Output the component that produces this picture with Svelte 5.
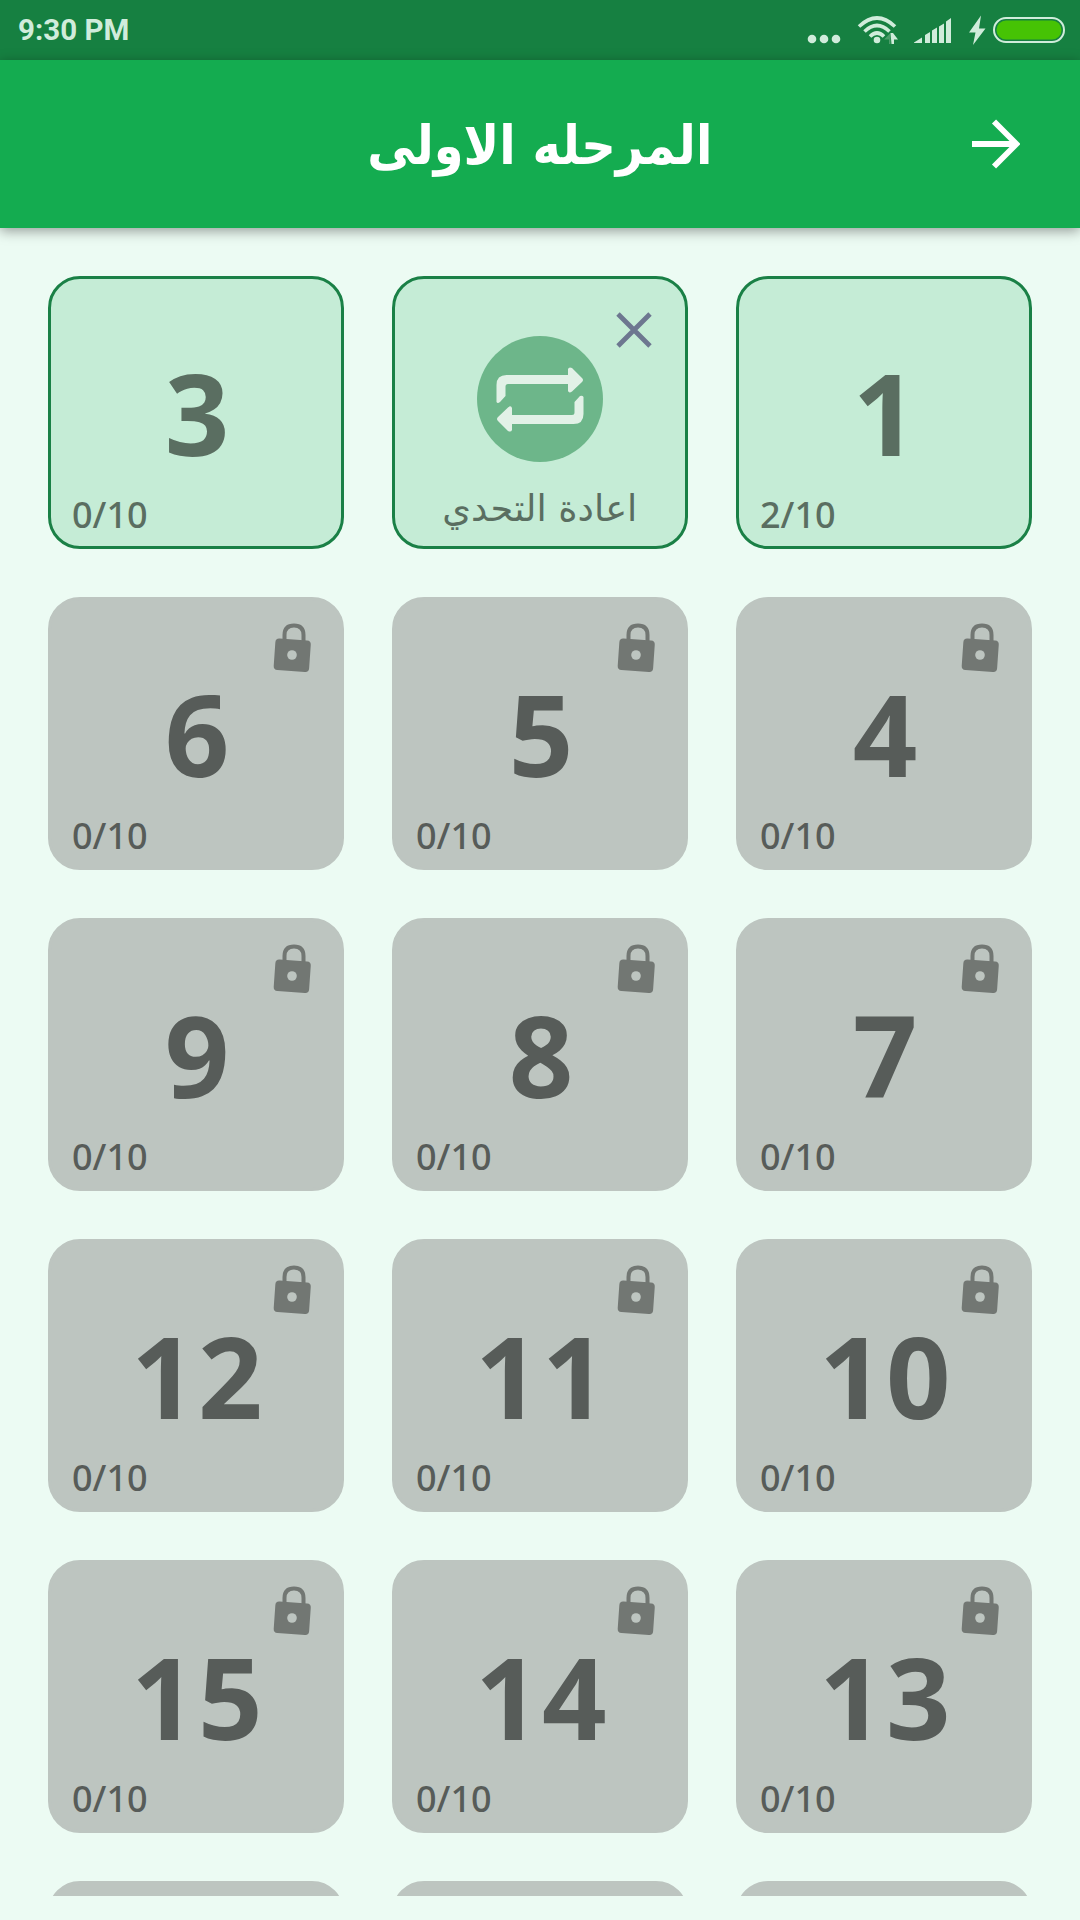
<script>
  const total = 15;
  const upcoming = [16, 17, 18];

  let levels = $state(
    Array.from({ length: total }, (_, i) => ({
      number: i + 1,
      score: i === 0 ? 2 : 0,
      locked: i > 2,
      retry: i === 1
    }))
  );

  function dismissRetry(level) {
    level.retry = false;
  }
</script>

<div class="screen">
  <div class="status-bar">
    <span class="clock">9:30 PM</span>
    <svg class="dots" width="36" height="60" viewBox="806 0 36 60">
      <circle cx="812" cy="39" r="4.3" />
      <circle cx="824" cy="39" r="4.3" />
      <circle cx="836" cy="39" r="4.3" />
    </svg>
    <svg class="wifi" width="42" height="60" viewBox="856 0 42 60">
      <g fill="none" stroke="#d0ecdb" stroke-width="3.6">
        <path d="M859 26.5Q877 9.500 895 26.500" />
        <path d="M864.500 31.500Q877 19.500 889.500 31.500" />
        <path d="M870 36.500Q877 29.500 884 36.500" />
      </g>
      <circle cx="877" cy="40" r="3.300" />
      <path d="M884 39.500L890.500 33V44H889V39.500z" fill="#4b9c69" />
      <path d="M890.500 33H893L898 39.500H894V44H891.500z" />
    </svg>
    <svg class="signal" width="38" height="60" viewBox="914 0 38 60">
      <path d="M914 42.500L922 37.500V43H914zM925 35L930 32V43H925zM932 30.500L937 27.500V43H932zM939 26.500L944 23.500V43H939zM946 21.500L951 18V43H946z" />
    </svg>
    <svg class="charge" width="96" height="60" viewBox="969 0 96 60">
      <path d="M981 15.500L969 32.500H975.500L973 45L985.500 28.500H979z" />
      <rect x="994" y="18" width="70" height="24" rx="12" fill="none" stroke="#d0ecdb" stroke-width="2" />
      <rect x="996.500" y="20.500" width="65" height="19" rx="9.500" class="charge-level" />
    </svg>
  </div>

  <header class="app-bar" dir="rtl">
    <button type="button" class="back" aria-label="رجوع">
      <svg width="50" height="50" viewBox="0 0 50 50">
        <path d="M2 25H45M24 2.500L46.500 25L24 47.500" fill="none" stroke="#fff" stroke-width="5.800" />
      </svg>
    </button>
    <h1><span>المرحله الاولى</span></h1>
  </header>

  <main class="levels" dir="rtl">
    {#each levels as level (level.number)}
      <div class="card" class:locked={level.locked}>
        {#if level.retry}
          <button type="button" class="dismiss" aria-label="اغلاق" onclick={() => dismissRetry(level)}>
            <svg width="36" height="36" viewBox="0 0 36 36">
              <path d="M2 2L34 34M34 2L2 34" fill="none" stroke="#6d7790" stroke-width="4.800" />
            </svg>
          </button>
          <svg class="retry-icon" width="126" height="126" viewBox="0 0 126 126">
            <circle cx="63" cy="63" r="63" fill="#6db68a" />
            <path
              d="M19.500 66V49Q19.500 39 29.500 39H91V33Q92 30.500 95 32L105 42Q107 44 105 46L95 55.500Q92 57.500 91 55V48H31Q28.500 48 28.500 50.500V60L23 66Q20.500 68 19.500 66z"
            />
            <path
              d="M106.500 61V78Q106.500 88 96.500 88H35V94Q34 96.500 31 95L21 85Q19 83 21 81L31 71.500Q34 69 35 72V79H95Q97.500 79 97.500 76.500V66L103 60Q105.500 59 106.500 61z"
            />
          </svg>
          <div class="retry-text"><span>اعادة التحدي</span></div>
        {:else}
          {#if level.locked}
            <svg class="lock" width="40" height="50" viewBox="0 0 40 50">
              <path d="M12.500 18V12Q12.500 2.500 22 2.500T31.500 12V19" fill="none" stroke="#727773" stroke-width="4" />
              <rect x="2.500" y="16.500" width="35.500" height="31.500" rx="4" transform="rotate(4 20 32)" fill="#727773" />
              <circle cx="20" cy="32" r="4.800" fill="#bdc5c0" />
            </svg>
          {/if}
          <div class="number">{level.number}</div>
          <div class="score" dir="ltr">{level.score}/10</div>
        {/if}
      </div>
    {/each}
    {#each upcoming as number (number)}
      <div class="card locked"></div>
    {/each}
  </main>
</div>

<style>
  :global(body) {
    background: #ecfbf3;
  }
  .screen {
    display: flex;
    flex-direction: column;
    width: 1080px;
    height: 1920px;
    box-sizing: border-box;
    padding-bottom: 24px;
    overflow: hidden;
    background: #ecfbf3;
    font-family: "Noto Sans", "DejaVu Sans", sans-serif;
  }
  button {
    display: block;
    padding: 0;
    border: none;
    background: none;
    cursor: pointer;
  }
  svg { display: block; }

  .status-bar {
    display: flex;
    flex: none;
    align-items: center;
    height: 60px;
    padding: 0 15px 0 18px;
    background: #168041;
  }
  .status-bar svg { fill: #d0ecdb; }
  .clock {
    flex: 1;
    font: 700 29.500px/62px Roboto, sans-serif;
    color: #d0ecdb;
  }
  .wifi { margin-left: 14px; }
  .signal { margin-left: 16px; }
  .charge { margin-left: 17px; }
  .status-bar .charge-level { fill: #46c304; }

  .app-bar {
    position: relative;
    z-index: 1;
    display: grid;
    flex: none;
    grid-template-columns: 50px 1fr 50px;
    align-items: center;
    height: 168px;
    box-sizing: border-box;
    padding: 0 60px;
    background: #14ac50;
    box-shadow: 0 3px 12px rgba(0, 0, 0, 0.38);
  }
  h1 {
    margin: 0;
    font: 700 50px/60px "DejaVu Sans", sans-serif;
    text-align: center;
    color: #fff;
  }
  h1 span {
    display: inline-block;
    white-space: nowrap;
    transform: translateY(2px) scale(0.96, 1.08);
  }

  .levels {
    display: grid;
    flex: 1;
    min-height: 0;
    grid-template-columns: repeat(3, 296px);
    grid-auto-rows: 273px;
    gap: 48px;
    padding: 48px 48px 0;
    overflow: hidden;
  }
  .card {
    position: relative;
    box-sizing: border-box;
    border: 3px solid #1a8046;
    border-radius: 32px;
    background: #c5ecd6;
    color: #5a6e61;
  }
  .card.locked {
    border-color: #bdc5c0;
    background: #bdc5c0;
    color: #575c59;
  }
  .number {
    padding: 73px 0 0 4px;
    font-size: 113px;
    font-weight: 700;
    line-height: 120px;
    letter-spacing: 2px;
    text-align: center;
  }
  .score {
    position: absolute;
    left: 21px;
    bottom: 9px;
    font-size: 36px;
    font-weight: 500;
    line-height: 44px;
  }
  .lock {
    position: absolute;
    top: 23px;
    right: 29px;
  }
  .dismiss {
    position: absolute;
    top: 33px;
    right: 33px;
  }
  .retry-icon {
    margin: 57px auto 0;
    fill: #e2f1e7;
  }
  .retry-text {
    padding-top: 20px;
    font: 400 35px/50px "DejaVu Sans", sans-serif;
    text-align: center;
  }
  .retry-text span {
    display: inline-block;
    white-space: nowrap;
    transform: translateY(2px) scale(1.05, 1.04);
  }
</style>
